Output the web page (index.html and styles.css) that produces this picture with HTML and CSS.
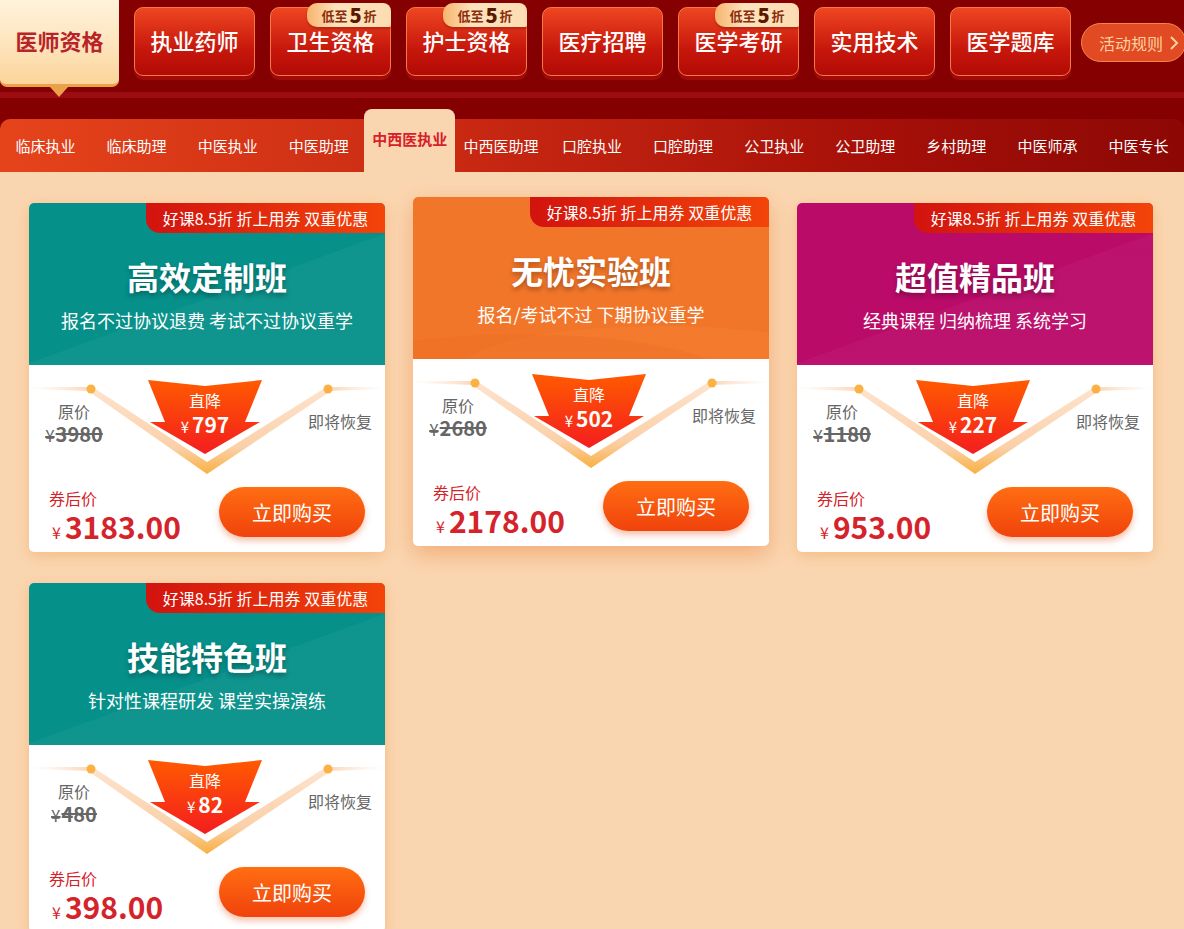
FILE: index.html
```html
<!DOCTYPE html>
<html lang="zh-CN">

<head>
    <meta charset="utf-8">
    <meta name="viewport" content="width=device-width, initial-scale=1.0">
    <title>医师资格 好课优惠</title>
    <link rel="stylesheet" href="styles.css">
</head>

<body>
    <header class="topnav">
        <a class="cat active">医师资格</a>
        <a class="cat">执业药师</a>
        <a class="cat"><span class="promo">低至<b>5</b>折</span>卫生资格</a>
        <a class="cat"><span class="promo">低至<b>5</b>折</span>护士资格</a>
        <a class="cat">医疗招聘</a>
        <a class="cat"><span class="promo">低至<b>5</b>折</span>医学考研</a>
        <a class="cat">实用技术</a>
        <a class="cat">医学题库</a>
        <a class="rules">活动规则
            <svg width="10" height="16" viewBox="0 0 10 16"><polyline points="2,2 8,8 2,14" fill="none" stroke="#fcd0a0" stroke-width="2"/></svg>
        </a>
    </header>

    <section class="panel">
        <nav class="tabs">
            <a class="tab">临床执业</a>
            <a class="tab">临床助理</a>
            <a class="tab">中医执业</a>
            <a class="tab">中医助理</a>
            <a class="tab current">中西医执业</a>
            <a class="tab">中西医助理</a>
            <a class="tab">口腔执业</a>
            <a class="tab">口腔助理</a>
            <a class="tab">公卫执业</a>
            <a class="tab">公卫助理</a>
            <a class="tab">乡村助理</a>
            <a class="tab">中医师承</a>
            <a class="tab">中医专长</a>
        </nav>

        <div class="cards">
            <!-- 高效定制班 -->
            <article class="card">
                <div class="head teal">
                    <span class="tag">好课8.5折 折上用券 双重优惠</span>
                    <h2>高效定制班</h2>
                    <p>报名不过协议退费 考试不过协议重学</p>
                </div>
                <div class="deal">
                    <svg class="deco" viewBox="0 0 356 112">
                        <defs>
                            <linearGradient id="fadeL" x1="0" x2="1"><stop offset="0" stop-color="#fde6d4" stop-opacity="0"/><stop offset="1" stop-color="#fbd4b4"/></linearGradient>
                            <linearGradient id="fadeR" x1="1" x2="0"><stop offset="0" stop-color="#fde6d4" stop-opacity="0"/><stop offset="1" stop-color="#fbd4b4"/></linearGradient>
                            <linearGradient id="vband" x1="0" y1="0" x2="0" y2="1"><stop offset="0" stop-color="#fde4d0"/><stop offset="0.7" stop-color="#fbd0a8"/><stop offset="1" stop-color="#f8b040"/></linearGradient>
                        </defs>
                        <polygon points="0,22 62,22 62,26 0,24" fill="url(#fadeL)"/>
                        <polygon points="356,22 299,22 299,26 356,24" fill="url(#fadeR)"/>
                        <polygon points="62,21 178,97 299,21 299,28 178,109 62,28" fill="url(#vband)"/>
                        <circle cx="62" cy="24" r="4.5" fill="#fbb144"/>
                        <circle cx="299" cy="24" r="4.5" fill="#fbb144"/>
                    </svg>
                    <div class="orig">
                        <span class="lbl">原价</span>
                        <s><small>¥</small>3980</s>
                    </div>
                    <div class="arrow">
                        <svg viewBox="0 0 114 75">
                            <defs><linearGradient id="arr" x1="0" y1="0" x2="0" y2="1"><stop offset="0" stop-color="#ff5a00"/><stop offset="1" stop-color="#f41d1f"/></linearGradient></defs>
                            <polygon points="0,0 57,6 114,0 97,42 112,42 57,74 2,42 17,42" fill="url(#arr)"/>
                        </svg>
                        <span class="drop">直降</span>
                        <span class="cut"><small>¥</small>797</span>
                    </div>
                    <div class="restore">即将恢复</div>
                </div>
                <div class="buy">
                    <div class="final">
                        <span class="lbl">券后价</span>
                        <span class="num"><small>¥</small>3183.00</span>
                    </div>
                    <a class="btn">立即购买</a>
                </div>
            </article>

            <!-- 无忧实验班 -->
            <article class="card raised">
                <div class="head orange">
                    <span class="tag">好课8.5折 折上用券 双重优惠</span>
                    <h2>无忧实验班</h2>
                    <p>报名/考试不过 下期协议重学</p>
                </div>
                <div class="deal">
                    <svg class="deco" viewBox="0 0 356 112">
                        <polygon points="0,22 62,22 62,26 0,24" fill="url(#fadeL)"/>
                        <polygon points="356,22 299,22 299,26 356,24" fill="url(#fadeR)"/>
                        <polygon points="62,21 178,97 299,21 299,28 178,109 62,28" fill="url(#vband)"/>
                        <circle cx="62" cy="24" r="4.5" fill="#fbb144"/>
                        <circle cx="299" cy="24" r="4.5" fill="#fbb144"/>
                    </svg>
                    <div class="orig">
                        <span class="lbl">原价</span>
                        <s><small>¥</small>2680</s>
                    </div>
                    <div class="arrow">
                        <svg viewBox="0 0 114 75"><polygon points="0,0 57,6 114,0 97,42 112,42 57,74 2,42 17,42" fill="url(#arr)"/></svg>
                        <span class="drop">直降</span>
                        <span class="cut"><small>¥</small>502</span>
                    </div>
                    <div class="restore">即将恢复</div>
                </div>
                <div class="buy">
                    <div class="final">
                        <span class="lbl">券后价</span>
                        <span class="num"><small>¥</small>2178.00</span>
                    </div>
                    <a class="btn">立即购买</a>
                </div>
            </article>

            <!-- 超值精品班 -->
            <article class="card">
                <div class="head berry">
                    <span class="tag">好课8.5折 折上用券 双重优惠</span>
                    <h2>超值精品班</h2>
                    <p>经典课程 归纳梳理 系统学习</p>
                </div>
                <div class="deal">
                    <svg class="deco" viewBox="0 0 356 112">
                        <polygon points="0,22 62,22 62,26 0,24" fill="url(#fadeL)"/>
                        <polygon points="356,22 299,22 299,26 356,24" fill="url(#fadeR)"/>
                        <polygon points="62,21 178,97 299,21 299,28 178,109 62,28" fill="url(#vband)"/>
                        <circle cx="62" cy="24" r="4.5" fill="#fbb144"/>
                        <circle cx="299" cy="24" r="4.5" fill="#fbb144"/>
                    </svg>
                    <div class="orig">
                        <span class="lbl">原价</span>
                        <s><small>¥</small>1180</s>
                    </div>
                    <div class="arrow">
                        <svg viewBox="0 0 114 75"><polygon points="0,0 57,6 114,0 97,42 112,42 57,74 2,42 17,42" fill="url(#arr)"/></svg>
                        <span class="drop">直降</span>
                        <span class="cut"><small>¥</small>227</span>
                    </div>
                    <div class="restore">即将恢复</div>
                </div>
                <div class="buy">
                    <div class="final">
                        <span class="lbl">券后价</span>
                        <span class="num"><small>¥</small>953.00</span>
                    </div>
                    <a class="btn">立即购买</a>
                </div>
            </article>

            <!-- 技能特色班 -->
            <article class="card">
                <div class="head teal">
                    <span class="tag">好课8.5折 折上用券 双重优惠</span>
                    <h2>技能特色班</h2>
                    <p>针对性课程研发 课堂实操演练</p>
                </div>
                <div class="deal">
                    <svg class="deco" viewBox="0 0 356 112">
                        <polygon points="0,22 62,22 62,26 0,24" fill="url(#fadeL)"/>
                        <polygon points="356,22 299,22 299,26 356,24" fill="url(#fadeR)"/>
                        <polygon points="62,21 178,97 299,21 299,28 178,109 62,28" fill="url(#vband)"/>
                        <circle cx="62" cy="24" r="4.5" fill="#fbb144"/>
                        <circle cx="299" cy="24" r="4.5" fill="#fbb144"/>
                    </svg>
                    <div class="orig">
                        <span class="lbl">原价</span>
                        <s><small>¥</small>480</s>
                    </div>
                    <div class="arrow">
                        <svg viewBox="0 0 114 75"><polygon points="0,0 57,6 114,0 97,42 112,42 57,74 2,42 17,42" fill="url(#arr)"/></svg>
                        <span class="drop">直降</span>
                        <span class="cut"><small>¥</small>82</span>
                    </div>
                    <div class="restore">即将恢复</div>
                </div>
                <div class="buy">
                    <div class="final">
                        <span class="lbl">券后价</span>
                        <span class="num"><small>¥</small>398.00</span>
                    </div>
                    <a class="btn">立即购买</a>
                </div>
            </article>
        </div>
    </section>
</body>

</html>
```

FILE: styles.css
```css
body {
    margin: 0;
    background-color: #fad6b0;
    font-family: "Noto Sans CJK SC", "Noto Sans", sans-serif;
}

a {
    text-decoration: none;
}

/* top category bar */
.topnav {
    display: flex;
    align-items: flex-start;
    gap: 15px;
    height: 92px;
    background-color: #850000;
    border-bottom: 6px solid #9b0d12;
    position: relative;
    z-index: 2;
}

.cat {
    position: relative;
    flex: 0 0 121px;
    height: 69px;
    margin-top: 7px;
    padding-bottom: 3px;
    box-sizing: border-box;
    display: flex;
    align-items: center;
    justify-content: center;
    border: 1px solid #f77a45;
    border-radius: 9px;
    background: linear-gradient(180deg, #ee4622, #c8180c 60%, #b20a06);
    box-shadow: 0 4px 0 #a00a08;
    color: #fff;
    font-size: 22px;
    line-height: 1;
    font-weight: 500;
}

.cat.active {
    flex: 0 0 119px;
    height: 87px;
    margin-top: 0;
    padding-bottom: 5px;
    border: none;
    border-bottom: 3px solid #eba04a;
    border-radius: 0 0 7px 7px;
    background: linear-gradient(180deg, #fff3dc, #fde2b8 60%, #fbd49a);
    box-shadow: none;
    color: #b8232a;
    font-weight: 700;
}

.cat.active::after {
    content: "";
    position: absolute;
    left: 50px;
    bottom: -13px;
    border-left: 9px solid transparent;
    border-right: 9px solid transparent;
    border-top: 10px solid #eba04a;
}

.promo {
    position: absolute;
    top: -5px;
    right: -1px;
    width: 84px;
    height: 24px;
    display: flex;
    align-items: center;
    justify-content: center;
    gap: 2px;
    border-radius: 10px 8px 2px 10px;
    background: linear-gradient(90deg, #f7b46e, #fde3be 35%, #fddcb2);
    box-shadow: 0 2px 2px rgba(120, 20, 0, 0.35);
    color: #8a2e0c;
    font-size: 13px;
    line-height: 1;
    font-weight: 700;
}

.promo b {
    font-size: 20px;
    color: #5a1a02;
    line-height: 1;
}

.rules {
    margin-top: 23px;
    margin-left: -5px;
    height: 39px;
    padding: 0 0 0 17px;
    width: 105px;
    flex-shrink: 0;
    box-sizing: border-box;
    display: flex;
    align-items: center;
    gap: 6px;
    border: 1px solid #f5864a;
    border-radius: 20px;
    background-color: #e14a22;
    color: #fcd0a0;
    font-size: 16px;
}

/* sub tabs */
.panel {
    background-color: #850000;
    padding-top: 11px;
}

.tabs {
    display: flex;
    align-items: flex-end;
    height: 53px;
    margin-top: 10px;
    border-radius: 10px 10px 0 0;
    background: linear-gradient(90deg, #e5441b, #c82812 40%, #a50f08 75%, #8c0805);
}

.tab {
    flex: 1;
    height: 53px;
    display: flex;
    align-items: center;
    justify-content: center;
    color: #fff;
    font-size: 15px;
    white-space: nowrap;
}

.tab.current {
    height: 63px;
    border-radius: 8px 8px 0 0;
    background-color: #fad6b0;
    color: #d7202a;
    font-weight: 700;
    padding-bottom: 4px;
    box-sizing: border-box;
}

/* cards */
.cards {
    display: grid;
    grid-template-columns: repeat(3, 356px);
    column-gap: 28px;
    row-gap: 31px;
    padding: 31px 29px 20px;
    background-color: #fad6b0;
}

.card {
    position: relative;
    height: 349px;
    border-radius: 5px;
    overflow: hidden;
    background-color: #fff;
    box-shadow: 0 4px 14px rgba(236, 140, 60, 0.35);
}

.card.raised {
    margin-top: -6px;
    margin-bottom: 6px;
    box-shadow: 0 8px 22px rgba(232, 110, 40, 0.4);
}

.head {
    position: relative;
    height: 162px;
    text-align: center;
    color: #fff;
    overflow: hidden;
}

.head.teal {
    background:
        linear-gradient(160deg, transparent 55%, rgba(255, 255, 255, 0.035) 55%),
        #06908a;
}

.head.orange {
    background:
        radial-gradient(ellipse 120% 60% at 30% 115%, rgba(225, 95, 25, 0.18) 50%, transparent 51%),
        radial-gradient(ellipse 110% 50% at 70% 105%, rgba(255, 150, 80, 0.12) 50%, transparent 51%),
        #f27629;
}

.head.berry {
    background:
        linear-gradient(160deg, transparent 55%, rgba(255, 255, 255, 0.03) 55%),
        #ba0b69;
}

.tag {
    position: absolute;
    top: 0;
    right: 0;
    width: 239px;
    height: 30px;
    line-height: 30px;
    border-radius: 0 0 0 14px;
    background: linear-gradient(90deg, #d2130f, #f3440a);
    color: #fff;
    font-size: 16px;
}

.head h2 {
    margin: 53px 0 0;
    font-size: 32px;
    line-height: 40px;
    font-weight: 700;
    text-shadow: 0 3px 5px rgba(0, 0, 0, 0.3);
}

.head p {
    margin: 12px 0 0;
    font-size: 18px;
    line-height: 24px;
}

.deal {
    position: relative;
    height: 112px;
    display: grid;
    grid-template-columns: 119px 114px 1fr;
}

.deco {
    position: absolute;
    left: 0;
    top: 0;
    width: 356px;
    height: 112px;
}

.orig {
    position: relative;
    width: 70px;
    margin-left: 10px;
    padding-top: 35px;
    display: flex;
    flex-direction: column;
    align-items: center;
    color: #666;
}

.lbl {
    font-size: 16px;
    line-height: 22px;
}

.orig s {
    font-size: 20px;
    line-height: 24px;
    font-weight: 700;
    text-decoration-thickness: 2px;
}

.orig small {
    font-size: 17px;
    font-weight: 400;
    margin-right: 1px;
}

.cut small {
    font-size: 15px;
    font-weight: 400;
    margin-right: 3px;
}

.arrow {
    position: relative;
    height: 75px;
    margin-top: 15px;
    display: flex;
    flex-direction: column;
    align-items: center;
    color: #fff;
}

.arrow svg {
    position: absolute;
    left: 0;
    top: 0;
    width: 114px;
    height: 75px;
}

.drop {
    position: relative;
    margin-top: 9px;
    font-size: 16px;
    line-height: 22px;
}

.cut {
    position: relative;
    font-size: 21px;
    line-height: 26px;
    font-weight: 700;
}

.restore {
    position: relative;
    justify-self: end;
    padding: 45px 13px 0 0;
    color: #666;
    font-size: 16px;
    line-height: 22px;
}

.buy {
    display: flex;
    justify-content: space-between;
    align-items: flex-start;
    padding: 10px 20px 0 20px;
}

.final {
    display: flex;
    flex-direction: column;
    color: #d5232b;
}

.num {
    font-size: 30px;
    line-height: 34px;
    font-weight: 700;
    padding-left: 3px;
}

.num small {
    font-size: 16px;
    font-weight: 400;
    margin-right: 4px;
}

.btn {
    width: 146px;
    height: 50px;
    display: flex;
    align-items: center;
    justify-content: center;
    border-radius: 25px;
    background: linear-gradient(180deg, #ff6e12, #f0420c);
    box-shadow: 0 4px 6px rgba(230, 80, 20, 0.35);
    color: #fff;
    font-size: 20px;
}
```
